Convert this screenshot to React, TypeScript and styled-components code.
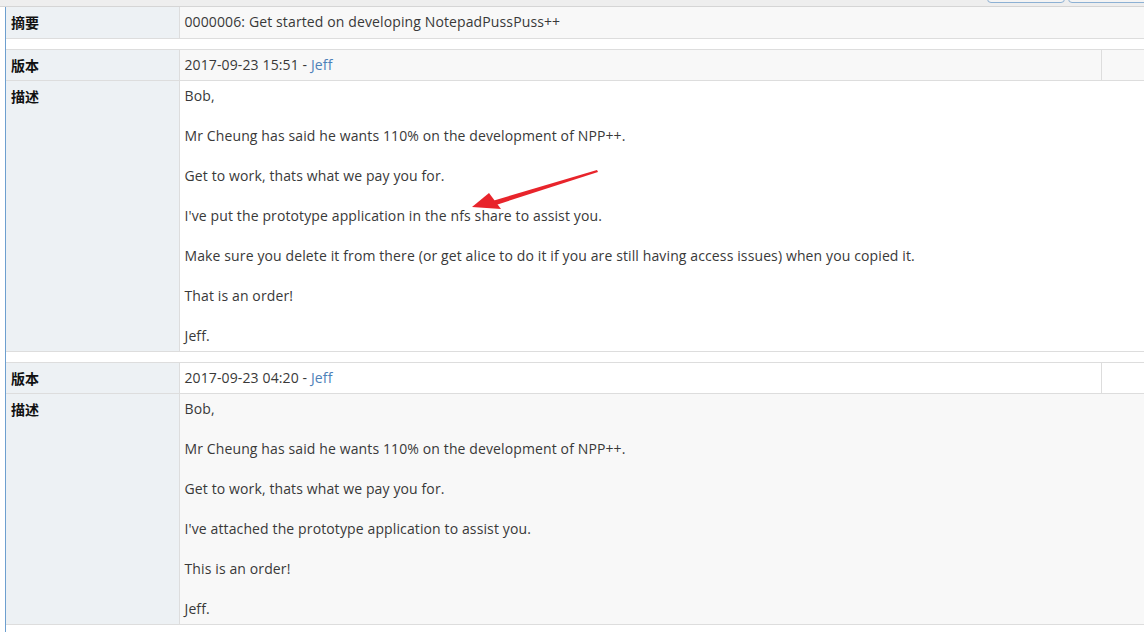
import React from 'react';
import styled, { createGlobalStyle } from 'styled-components';

const GlobalStyle = createGlobalStyle`
  html, body {
    margin: 0;
    padding: 0;
    background: #fff;
    overflow: hidden;
  }
  body {
    font-family: "Open Sans", "Noto Sans CJK SC", sans-serif;
    font-size: 14px;
    letter-spacing: 0.12px;
    color: #393939;
  }
`;

interface IVersion {
  date: string;
  author: string;
  lines: string[];
  shaded: boolean;
}

const versions: IVersion[] = [
  {
    date: '2017-09-23 15:51',
    author: 'Jeff',
    shaded: false,
    lines: [
      'Bob,',
      'Mr Cheung has said he wants 110% on the development of NPP++.',
      'Get to work, thats what we pay you for.',
      "I've put the prototype application in the nfs share to assist you.",
      'Make sure you delete it from there (or get alice to do it if you are still having access issues) when you copied it.',
      'That is an order!',
      'Jeff.',
    ],
  },
  {
    date: '2017-09-23 04:20',
    author: 'Jeff',
    shaded: true,
    lines: [
      'Bob,',
      'Mr Cheung has said he wants 110% on the development of NPP++.',
      'Get to work, thats what we pay you for.',
      "I've attached the prototype application to assist you.",
      'This is an order!',
      'Jeff.',
    ],
  },
];

export default function App() {
  return (
    <Page>
      <GlobalStyle />
      <TopBar>
        <ToolButton />
        <ToolButton />
      </TopBar>
      <Panel>
        <Table>
          <colgroup>
            <col style={{ width: 173 }} />
            <col style={{ width: 922 }} />
            <col />
          </colgroup>
          <tbody>
            <SummaryRow>
              <LabelCell>摘要</LabelCell>
              <ValueCell colSpan={2} shaded>
                0000006: Get started on developing NotepadPussPuss++
              </ValueCell>
            </SummaryRow>
            {versions.map((v, i) => (
              <React.Fragment key={i}>
                <tr>
                  <SpacerCell colSpan={3} />
                </tr>
                <tr>
                  <LabelCell>版本</LabelCell>
                  <ValueCell shaded={!v.shaded}>
                    {v.date} - <AuthorLink>{v.author}</AuthorLink>
                  </ValueCell>
                  <ValueCell shaded={!v.shaded} />
                </tr>
                <tr>
                  <LabelCell>描述</LabelCell>
                  <ValueCell colSpan={2} shaded={v.shaded}>
                    {v.lines.map((line, j) => (
                      <Para key={j} last={j === v.lines.length - 1}>
                        {line}
                      </Para>
                    ))}
                  </ValueCell>
                </tr>
              </React.Fragment>
            ))}
          </tbody>
        </Table>
        <Arrow width="140" height="50" viewBox="0 0 140 50">
          <path d="M125 1 L22 31.5 L24 36 L126 3 Z" fill="#e8242b" />
          <path d="M0 38 L17 24 L29 40 Z" fill="#e8242b" />
        </Arrow>
      </Panel>
    </Page>
  );
}

const Page = styled.div`
  width: 1144px;
  height: 632px;
  overflow: hidden;
`;

const TopBar = styled.div`
  height: 6px;
  background: #eeeeee;
  border-bottom: 1px solid #d5d5d5;
  display: flex;
  justify-content: flex-end;
  align-items: flex-end;
  gap: 3px;
  margin-right: -10px;
  overflow: hidden;
`;

const ToolButton = styled.div`
  width: 76px;
  height: 20px;
  margin-bottom: 3px;
  border: 1px solid #8db1d4;
  border-radius: 0 0 4px 4px;
  background: #f4f4f4;
  &:last-child {
    width: 84px;
  }
`;

const Panel = styled.div`
  position: relative;
  margin-left: 5px;
  border-left: 1px solid #6d9fcf;
  height: 640px;
`;

const Table = styled.table`
  border-collapse: collapse;
  width: 1160px;
  table-layout: fixed;
  line-height: 20px;
`;

const LabelCell = styled.td`
  background: #edf1f4;
  font-family: "Noto Sans CJK SC", "Open Sans", sans-serif;
  font-weight: bold;
  color: #111;
  font-size: 14px;
  letter-spacing: 0;
  padding: 5px 5px;
  vertical-align: top;
  border: 1px solid #dddddd;
  border-left: none;
  border-top: none;
`;

const ValueCell = styled.td<{ shaded?: boolean }>`
  background: ${props => (props.shaded ? '#f8f8f8' : '#ffffff')};
  padding: 5px 5px;
  vertical-align: top;
  border: 1px solid #dddddd;
  border-top: none;
`;

const SummaryRow = styled.tr`
  & > td {
    padding-bottom: 6px;
  }
`;

const SpacerCell = styled.td`
  height: 10px;
  padding: 0;
  background: #fff;
  border-bottom: 1px solid #dddddd;
`;

const AuthorLink = styled.a`
  color: #4c80b8;
  text-decoration: none;
`;

const Para = styled.p<{ last: boolean }>`
  margin: 0 0 ${props => (props.last ? '0' : '20px')};
`;

const Arrow = styled.svg`
  position: absolute;
  left: 466px;
  top: 162px;
  overflow: visible;
`;
